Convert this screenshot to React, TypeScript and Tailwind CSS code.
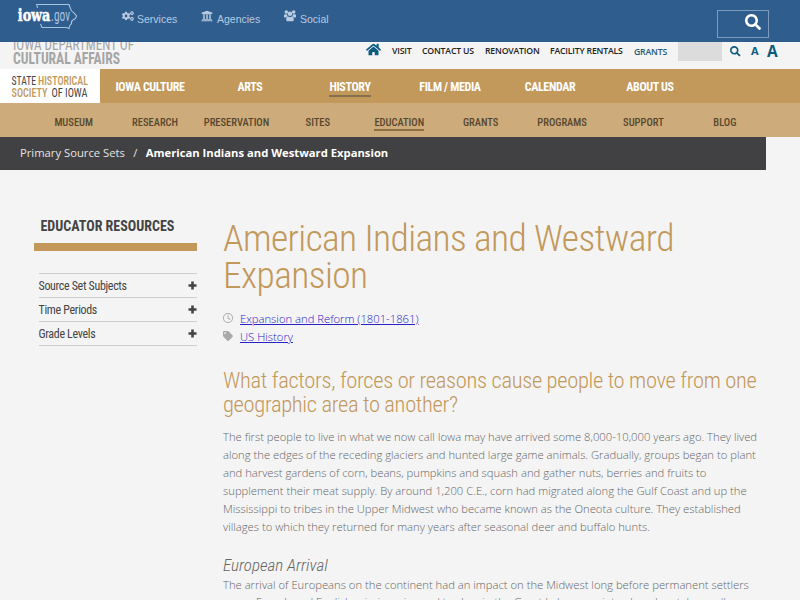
import { FaCogs, FaUniversity, FaSearch, FaHome, FaTag } from "react-icons/fa";
import { FaRegClock } from "react-icons/fa6";

const mainNav = ["Iowa Culture", "Arts", "History", "Film / Media", "Calendar", "About Us"];
const subNav = ["Museum", "Research", "Preservation", "Sites", "Education", "Grants", "Programs", "Support", "Blog"];
const resources = ["Source Set Subjects", "Time Periods", "Grade Levels"];

const condensed = "font-['Roboto_Condensed',Roboto,sans-serif] [font-stretch:75%]";

function IowaLogo() {
  return (
    <svg className="mt-[3px] ml-[17px] h-[28px] w-[61px]" viewBox="0 0 61 28" fill="none">
      <path d="M20.500 5 L19.700 1.500 H52 Q52.500 3 53.500 5.500 Q54 8 56.500 9.500 L59.500 13 Q59 16 56 17 Q54 18 54.500 20.500 Q52.500 22 52 25.500 L49.500 24.500 H25 L23.500 21" stroke="#a9c3df" strokeWidth="1.1" />
      <text x="0.800" y="17.800" textLength="32.500" lengthAdjust="spacingAndGlyphs" fill="#fff" stroke="#fff" strokeWidth=".5" fontFamily="DejaVu Serif, serif" fontWeight="700" fontSize="16.500">iowa</text>
      <text className={condensed} x="34" y="17.800" textLength="19" lengthAdjust="spacingAndGlyphs" fill="#a9c3df" fontWeight="400" fontSize="16">.gov</text>
    </svg>
  );
}

function UsersIcon() {
  return (
    <svg className="h-[12px] w-[12px]" viewBox="0 0 12 12" fill="currentColor">
      <circle cx="2.300" cy="2" r="1.800" />
      <circle cx="9.700" cy="2" r="1.800" />
      <circle cx="6" cy="3.800" r="2.300" />
      <path d="M0 7V5.200Q0 4.200 1 4.200H3Q3.300 6 4 6.500Q2.600 6.500 2.200 7.500H.7Q0 7.500 0 7ZM12 7V5.200Q12 4.200 11 4.200H9Q8.700 6 8 6.500Q9.400 6.500 9.800 7.500H11.300Q12 7.500 12 7Z" />
      <path d="M2.200 9.700Q2.200 6.500 4.200 6.500Q6 7.500 7.800 6.500Q9.800 6.500 9.800 9.700Q9.800 11.300 8.500 11.300H3.500Q2.200 11.300 2.200 9.700Z" />
    </svg>
  );
}

function StateBar() {
  return (
    <header className="flex h-[42px] bg-[#2e5d8e] font-['Liberation_Sans',sans-serif] text-[10.500px] text-[#b9cbe0]">
      <IowaLogo />
      <div className="ml-[44px] flex w-[79px] items-start gap-[3px] pt-[10px]">
        <FaCogs className="h-[12px] w-[12px]" />
        <span className="leading-[18px]">Services</span>
      </div>
      <div className="flex w-[83px] items-start gap-[4px] pt-[10px]">
        <FaUniversity className="h-[12px] w-[12px]" />
        <span className="leading-[18px]">Agencies</span>
      </div>
      <div className="flex items-start gap-[4px] pt-[10px]">
        <UsersIcon />
        <span className="leading-[18px]">Social</span>
      </div>
      <div className="mt-[10px] mr-[31px] ml-auto flex h-[28px] w-[52px] items-center justify-end border border-[#7d9cbd] pr-[7px] pb-[5px]">
        <FaSearch className="h-[16px] w-[16px] text-white" />
      </div>
    </header>
  );
}

function UtilityBar() {
  return (
    <div className="flex h-[27px] items-start overflow-hidden font-['Open_Sans',sans-serif] text-[8.700px] leading-[18px] font-semibold tracking-[-0.180px] text-[#222]">
      <svg className={`${condensed} h-[27px] w-[366px] tracking-normal`} viewBox="0 0 366 27" fill="#a5a5a5">
        <text x="13" y="7.500" textLength="121" lengthAdjust="spacingAndGlyphs" fontSize="16" fontWeight="400">IOWA DEPARTMENT OF</text>
        <text x="13" y="22.300" textLength="107" lengthAdjust="spacingAndGlyphs" fontSize="16" fontWeight="700">CULTURAL AFFAIRS</text>
      </svg>
      <FaHome className="h-[15px] w-[15px] text-[#0b5c80]" />
      <span className="ml-[11px] w-[30px]">VISIT</span>
      <span className="w-[63px]">CONTACT US</span>
      <span className="w-[65px]">RENOVATION</span>
      <span className="w-[84px]">FACILITY RENTALS</span>
      <span className="w-[44px] pt-px text-[#1e5b7c]">GRANTS</span>
      <span className="h-[19px] w-[44px] bg-[#dcdcdc]" />
      <FaSearch className="mt-[4px] ml-[8px] h-[10.500px] w-[10.500px] text-[#0b5c80]" />
      <span className="ml-[10.500px] text-[11px] font-bold text-[#0b5c80]">A</span>
      <span className="ml-[8.500px] text-[15.500px] leading-[18px] font-bold text-[#0b5c80]">A</span>
    </div>
  );
}

function Navigation() {
  return (
    <nav className={condensed}>
      <div className="flex h-[34px] bg-[#c2985b]">
        <svg className="h-[34px] w-[100px] bg-white" viewBox="0 0 100 34" fill="#444" fontSize="13">
          <text x="11.500" y="15.700" textLength="24.500" lengthAdjust="spacingAndGlyphs">STATE</text>
          <text x="38" y="15.700" textLength="50" lengthAdjust="spacingAndGlyphs" fill="#c2985b" fontWeight="500">HISTORICAL</text>
          <text x="11.500" y="27.700" textLength="36" lengthAdjust="spacingAndGlyphs" fill="#c2985b" fontWeight="500">SOCIETY</text>
          <text x="51.500" y="27.700" textLength="36" lengthAdjust="spacingAndGlyphs">OF IOWA</text>
        </svg>
        {mainNav.map((item) => (
          <a key={item} className="flex w-[100px] justify-center pt-[10px] text-[12px] leading-[17px] font-bold tracking-[-0.350px] text-white uppercase">
            <span className={item === "History" ? "h-[18px] border-b-2 border-[#84704f]" : ""}>{item}</span>
          </a>
        ))}
      </div>
      <div className="flex h-[34px] bg-[#cdab7a] pl-[33px]">
        {subNav.map((item) => (
          <a key={item} className="flex w-[81.400px] justify-center pt-[11px] text-[10.500px] leading-[17px] font-medium text-[#57472f] uppercase">
            <span className={item === "Education" ? "h-[17px] border-b-2 border-[#8d7145]" : ""}>{item}</span>
          </a>
        ))}
      </div>
    </nav>
  );
}

function Sidebar() {
  return (
    <aside className={`${condensed} ml-[33.500px] w-[163.500px] pt-[46px] text-[#444]`}>
      <h2 className="border-b-8 border-[#c2985b] pb-[7px] pl-[7px] text-[14px] leading-[20px] font-bold">EDUCATOR RESOURCES</h2>
      <ul className="mt-[22px] ml-[5px] border-t border-[#cfcfcf]">
        {resources.map((item) => (
          <li key={item} className="flex h-[24px] items-center justify-between border-b border-[#cfcfcf] text-[12px] tracking-[-0.330px]">
            <span className="pt-px">{item}</span>
            <svg className="mb-px h-[9px] w-[9px]" viewBox="0 0 9 9" fill="currentColor">
              <path d="M3.200.5H5.800V3.200H8.500V5.800H5.800V8.500H3.200V5.800H.5V3.200H3.200Z" />
            </svg>
          </li>
        ))}
      </ul>
    </aside>
  );
}

function Article() {
  return (
    <main className="ml-[26px] w-[560px] pt-[50px] font-['Open_Sans',sans-serif] text-[11.250px] leading-[18px] font-light whitespace-nowrap text-[#666]">
      <h1 className={`${condensed} text-[37.500px] leading-[37px] font-light tracking-[-0.600px] text-[#c2985b]`}>
        American Indians and Westward<br />Expansion
      </h1>
      <div className="mt-[16px] text-[#2a20c8]">
        <div className="flex gap-[7px]">
          <FaRegClock className="mt-[3px] h-[10px] w-[10px] text-[#aaa]" />
          <a className="underline">Expansion and Reform (1801-1861)</a>
        </div>
        <div className="flex gap-[7px]">
          <FaTag className="mt-[3px] h-[10px] w-[10px] text-[#aaa]" />
          <a className="underline">US History</a>
        </div>
      </div>
      <h2 className={`${condensed} mt-[22px] text-[22.500px] leading-[24px] font-light tracking-[-0.330px] text-[#c2985b]`}>
        What factors, forces or reasons cause people to move from one<br />geographic area to another?
      </h2>
      <p className="mt-[12px]">
        The first people to live in what we now call Iowa may have arrived some 8,000-10,000 years ago. They lived<br />
        along the edges of the receding glaciers and hunted large game animals. Gradually, groups began to plant<br />
        and harvest gardens of corn, beans, pumpkins and squash and gather nuts, berries and fruits to<br />
        supplement their meat supply. By around 1,200 C.E., corn had migrated along the Gulf Coast and up the<br />
        Mississippi to tribes in the Upper Midwest who became known as the Oneota culture. They established<br />
        villages to which they returned for many years after seasonal deer and buffalo hunts.
      </p>
      <h3 className={`${condensed} mt-[19px] text-[17px] leading-[20px] italic`}>European Arrival</h3>
      <p className="mt-px">
        The arrival of Europeans on the continent had an impact on the Midwest long before permanent settlers<br />
        <span className="relative -top-px">came. French and English missionaries and traders in the Great Lakes area introduced metals, small</span>
      </p>
    </main>
  );
}

export default function App() {
  return (
    <div className="h-[600px] w-[800px] overflow-hidden bg-[#f4f4f4]">
      <StateBar />
      <UtilityBar />
      <Navigation />
      <div className="flex h-[33px] w-[766px] items-center bg-[#414042] pl-[20px] font-['Open_Sans',sans-serif] text-[11.250px] text-[#e4e4e4]">
        <span>Primary Source Sets</span>
        <span className="mx-[8.300px]">/</span>
        <b className="text-white">American Indians and Westward Expansion</b>
      </div>
      <div className="flex">
        <Sidebar />
        <Article />
      </div>
    </div>
  );
}
